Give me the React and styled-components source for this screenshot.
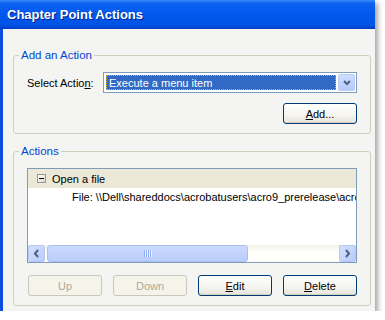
import styled, { createGlobalStyle } from 'styled-components';

const GlobalStyle = createGlobalStyle`
  html, body {
    margin: 0;
    padding: 0;
    background: #ffffff;
  }
  body {
    font-family: "Liberation Sans", Arial, sans-serif;
    font-size: 11px;
    color: #000000;
  }
`;

const Window = styled.div`
  width: 375px;
  height: 311px;
  display: flex;
  flex-direction: column;
  background: #f4f4f2;
  box-shadow: 3px 3px 5px rgba(0, 0, 0, 0.35);
`;

const TitleBar = styled.div`
  height: 29px;
  flex: 0 0 29px;
  display: flex;
  align-items: center;
  padding-left: 7px;
  background: linear-gradient(
    to bottom,
    #3d8dfa 0px,
    #0f62f0 3px,
    #0058ee 14px,
    #0054e6 25px,
    #0042cc 28px,
    #003dc4 29px
  );
  color: #ffffff;
  font-weight: bold;
  font-size: 13px;
  text-shadow: 1px 1px 0 #0a1f8a;
`;

const Body = styled.div`
  flex: 1;
  border-left: 3px solid #0a4ee0;
  padding: 20px 4px 5px 10px;
  display: flex;
  flex-direction: column;
`;

const Group = styled.fieldset`
  margin: ${(p) => (p.$gap ? `${p.$gap}px` : '0')} 0 0 0;
  padding: 0;
  border: 1px solid #d0d0bf;
  border-radius: 3px;
  min-width: 0;
`;

const Legend = styled.legend`
  margin-left: 5px;
  padding: 0 2px;
  line-height: 13px;
  font-size: 11.5px;
  color: #0046d5;
`;

const GroupInner = styled.div`
  padding: 10px 13px 9px 13px;
  display: flex;
  flex-direction: column;
`;

const Row = styled.div`
  display: flex;
  align-items: center;
  justify-content: ${(p) => p.$justify || 'flex-start'};
  margin-top: ${(p) => p.$top || 0}px;
`;

const Label = styled.label`
  flex: 0 0 76px;
`;

const Select = styled.div`
  flex: 1;
  height: 21px;
  box-sizing: border-box;
  border: 1px solid #7f9db9;
  background: #ffffff;
  display: flex;
  align-items: stretch;
  padding: 1px;
`;

const SelectValue = styled.div`
  flex: 1;
  margin: 1px 2px 1px 1px;
  background: #316ac5;
  color: #ffffff;
  border: 1px dotted #e9b200;
  display: flex;
  align-items: center;
  padding-left: 2px;
`;

const DropButton = styled.div`
  flex: 0 0 17px;
  border-radius: 2px;
  background: linear-gradient(to bottom, #cfdcfd, #b6cbfa);
  border: 1px solid #b9cdf8;
  box-sizing: border-box;
  display: flex;
  align-items: center;
  justify-content: center;
`;

const Button = styled.button`
  width: 74px;
  height: 21px;
  box-sizing: border-box;
  padding: 0;
  font-family: inherit;
  font-size: 11px;
  border-radius: 3px;
  border: 1px solid ${(p) => (p.disabled ? '#c9c7ba' : '#003c74')};
  color: ${(p) => (p.disabled ? '#aca899' : '#000000')};
  background: ${(p) =>
    p.disabled
      ? '#f5f4ea'
      : 'linear-gradient(to bottom, #ffffff 0%, #f5f4f0 60%, #e6e3d8 100%)'};
  box-shadow: ${(p) => (p.disabled ? 'none' : 'inset 0 -1px 0 #d6d0c0')};
`;

const ListBox = styled.div`
  height: 95px;
  box-sizing: border-box;
  border: 1px solid #7f9db9;
  background: #ffffff;
  display: flex;
  flex-direction: column;
`;

const ListRows = styled.div`
  flex: 1;
  overflow: hidden;
  white-space: nowrap;
`;

const TreeRow = styled.div`
  height: ${(p) => (p.$selected ? 19 : 18)}px;
  display: flex;
  align-items: center;
  padding-left: ${(p) => p.$indent}px;
  background: ${(p) => (p.$selected ? '#ebe8d7' : 'transparent')};
`;

const Expander = styled.span`
  width: 9px;
  height: 9px;
  box-sizing: border-box;
  border: 1px solid #919b9c;
  background: linear-gradient(to bottom right, #ffffff, #dcd8ca);
  margin-right: 6px;
  display: flex;
  align-items: center;
  justify-content: center;
  &::after {
    content: '';
    width: 5px;
    height: 1px;
    background: #000000;
  }
`;

const ScrollBar = styled.div`
  height: 17px;
  flex: 0 0 17px;
  display: flex;
  background: linear-gradient(to bottom, #f3f1e7, #fefefb 40%, #fefefb);
`;

const ArrowButton = styled.div`
  width: 17px;
  height: 17px;
  box-sizing: border-box;
  border: 1px solid #b4c8f6;
  border-radius: 2px;
  background: linear-gradient(to bottom right, #d4e0fd, #b8ccfa);
  display: flex;
  align-items: center;
  justify-content: center;
  margin-left: ${(p) => (p.$end ? 'auto' : '0')};
`;

const Thumb = styled.div`
  width: 201px;
  margin-left: 2px;
  box-sizing: border-box;
  border: 1px solid #a9bff0;
  border-radius: 3px;
  background: linear-gradient(to bottom, #cbdafe, #bacdfb);
  display: flex;
  align-items: center;
  justify-content: center;
  gap: 1px;
`;

const Grip = styled.span`
  width: 1px;
  height: 7px;
  background: #8eaaf0;
  box-shadow: 1px 0 0 #eef3fe;
`;

const ButtonRow = styled.div`
  display: flex;
  justify-content: space-between;
  margin-top: 12px;
  padding-left: 1px;
`;

const U = styled.span`
  text-decoration: underline;
`;

const Chevron = ({ dir }) => {
  const d = {
    down: 'M2 3 L5 6 L8 3',
    left: 'M6 1 L3 4.5 L6 8',
    right: 'M3 1 L6 4.5 L3 8',
  }[dir];
  return (
    <svg width="9" height="9" viewBox="0 0 9 9">
      <path d={d} fill="none" stroke="#4d6185" strokeWidth="2" />
    </svg>
  );
};

export default function App() {
  return (
    <>
      <GlobalStyle />
      <Window>
        <TitleBar>Chapter Point Actions</TitleBar>
        <Body>
          <Group>
            <Legend>Add an Action</Legend>
            <GroupInner>
              <Row>
                <Label>
                  Select Actio<U>n</U>:
                </Label>
                <Select>
                  <SelectValue>Execute a menu item</SelectValue>
                  <DropButton>
                    <Chevron dir="down" />
                  </DropButton>
                </Select>
              </Row>
              <Row $justify="flex-end" $top={10}>
                <Button>
                  <U>A</U>dd...
                </Button>
              </Row>
            </GroupInner>
          </Group>

          <Group $gap={11}>
            <Legend>Actions</Legend>
            <GroupInner>
              <ListBox>
                <ListRows>
                  <TreeRow $selected $indent={9}>
                    <Expander />
                    Open a file
                  </TreeRow>
                  <TreeRow $indent={44}>
                    File: \\Dell\shareddocs\acrobatusers\acro9_prerelease\acro
                  </TreeRow>
                </ListRows>
                <ScrollBar>
                  <ArrowButton>
                    <Chevron dir="left" />
                  </ArrowButton>
                  <Thumb>
                    <Grip />
                    <Grip />
                    <Grip />
                    <Grip />
                  </Thumb>
                  <ArrowButton $end>
                    <Chevron dir="right" />
                  </ArrowButton>
                </ScrollBar>
              </ListBox>
              <ButtonRow>
                <Button disabled>Up</Button>
                <Button disabled>Down</Button>
                <Button>
                  <U>E</U>dit
                </Button>
                <Button>
                  <U>D</U>elete
                </Button>
              </ButtonRow>
            </GroupInner>
          </Group>
        </Body>
      </Window>
    </>
  );
}
